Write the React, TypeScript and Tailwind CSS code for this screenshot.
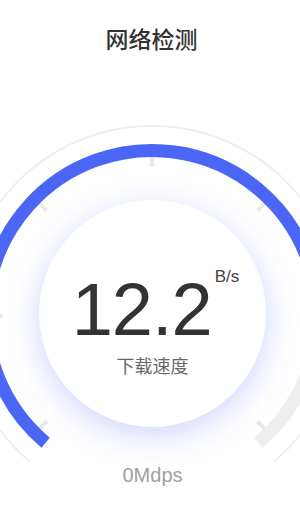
import React from "react";

const CX = 152;
const CY = 316;

function polar(r: number, deg: number): [number, number] {
  const a = (deg * Math.PI) / 180;
  return [CX + r * Math.cos(a), CY + r * Math.sin(a)];
}

function arc(r: number, a0: number, a1: number, large: number) {
  const [x0, y0] = polar(r, a0);
  const [x1, y1] = polar(r, a1);
  return `M ${x0.toFixed(2)} ${y0.toFixed(2)} A ${r} ${r} 0 ${large} 1 ${x1.toFixed(2)} ${y1.toFixed(2)}`;
}

const TICKS = [135, 180, 225, 270, 315, 0, 45];

function Gauge() {
  return (
    <svg
      className="absolute left-0 top-0"
      width={300}
      height={514}
      viewBox="0 0 300 514"
      fill="none"
    >
      <path d={arc(190, 130, 50, 1)} stroke="#efefef" strokeWidth={2} />
      <path d={arc(165.5, 130, 50, 1)} stroke="#eeeeee" strokeWidth={13} />
      {TICKS.map((a) => {
        const [x0, y0] = polar(149, a);
        const [x1, y1] = polar(160, a);
        return (
          <line
            key={a}
            x1={x0}
            y1={y0}
            x2={x1}
            y2={y1}
            stroke="#e9e9e9"
            strokeWidth={4}
          />
        );
      })}
      <path d={arc(165.5, 130, 10, 1)} stroke="#4a66f6" strokeWidth={13} />
    </svg>
  );
}

export default function App() {
  return (
    <div className="relative w-[300px] h-[514px] overflow-hidden bg-white font-['Liberation_Sans',sans-serif]">
      <Gauge />
      <div className="relative flex h-[76px] items-center justify-center pl-[3px] font-['Noto_Sans_CJK_SC',sans-serif] text-[23px] font-medium leading-none text-[#333333]">
        网络检测
      </div>
      <div className="relative ml-[39px] mt-[124px] flex h-[227px] w-[227px] flex-col items-center rounded-full bg-white shadow-[0_8px_32px_rgba(82,104,248,0.28)]">
        <div className="mt-[68px] flex items-start justify-center pl-[6px]">
          <span className="mt-[5px] text-[74px] leading-none tracking-[-1px] text-[#333333]">12.2</span>
          <span className="ml-[3px] text-[17px] leading-none text-[#444444]">B/s</span>
        </div>
        <div className="mt-[9px] font-['Noto_Sans_CJK_SC',sans-serif] text-[18px] leading-none text-[#666666]">
          下载速度
        </div>
      </div>
      <div className="relative mt-[38px] pl-[5px] text-center text-[20px] leading-none text-[#a0a0a0]">
        0Mdps
      </div>
    </div>
  );
}
